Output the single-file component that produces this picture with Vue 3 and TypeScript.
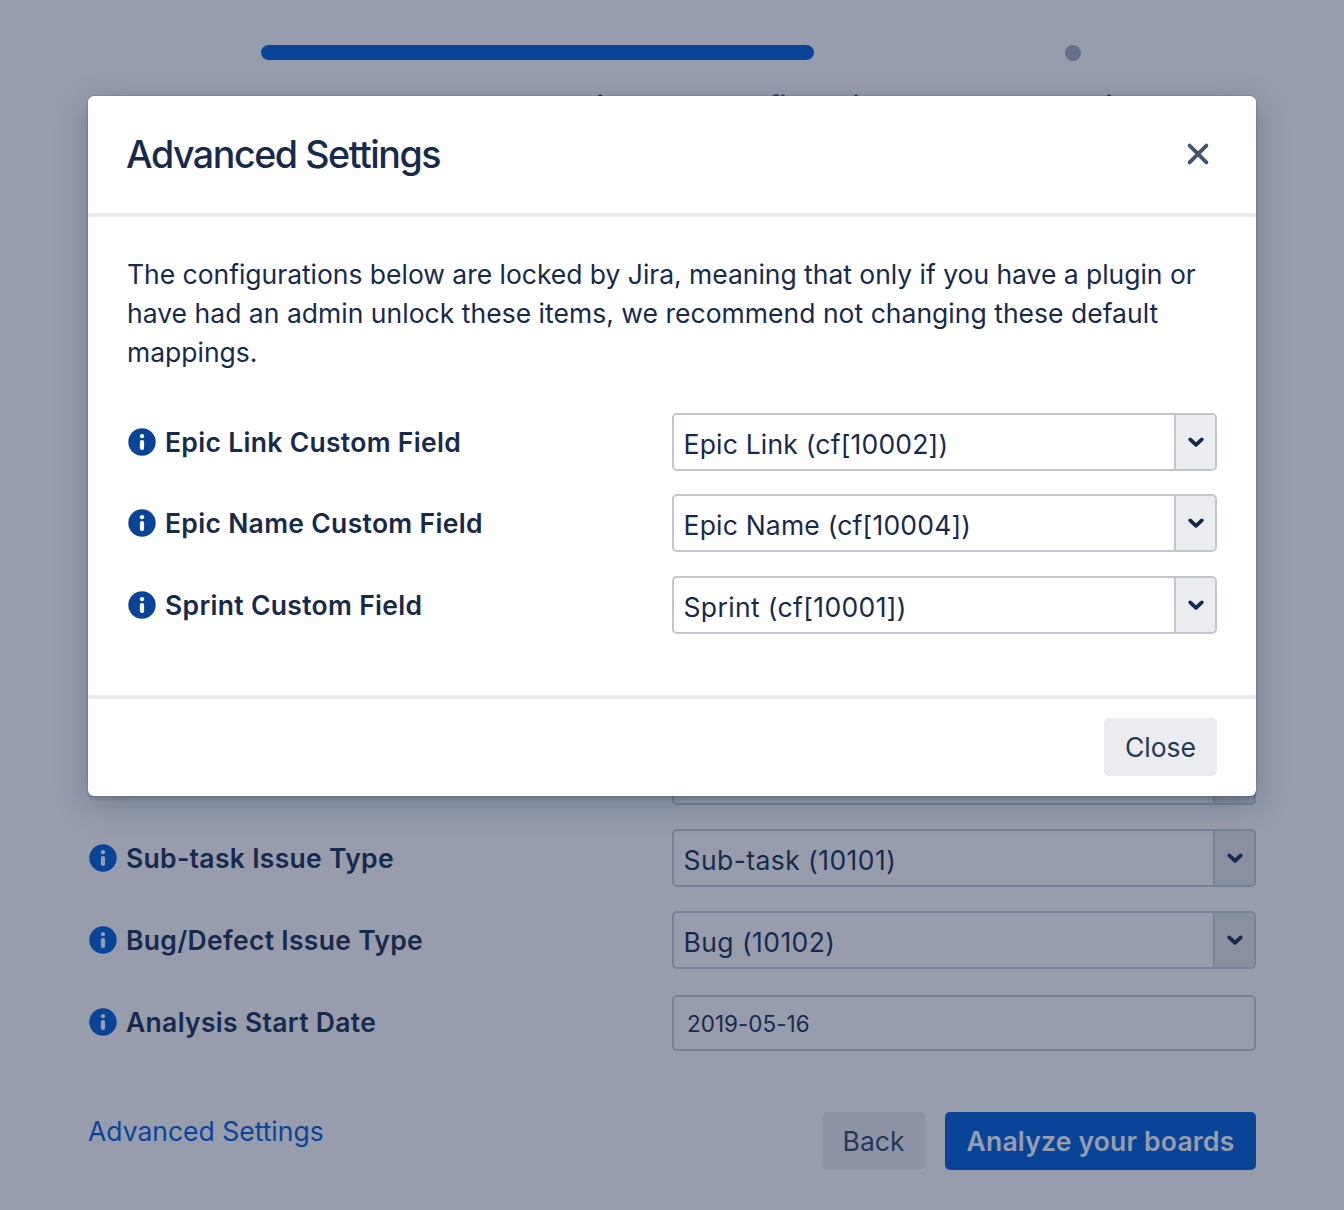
<script setup lang="ts">
interface Field {
  label: string
  value: string
  kind: 'select' | 'text'
}

const steps: { name: string; active?: boolean }[] = [
  { name: 'Welcome' },
  { name: 'Board Selection' },
  { name: 'Configuration', active: true },
  { name: 'Analysis' },
]

const pageFields: Field[] = [
  { label: 'Story Issue Type', value: 'Story (10100)', kind: 'select' },
  { label: 'Sub-task Issue Type', value: 'Sub-task (10101)', kind: 'select' },
  { label: 'Bug/Defect Issue Type', value: 'Bug (10102)', kind: 'select' },
  { label: 'Analysis Start Date', value: '2019-05-16', kind: 'text' },
]

const modalFields: Field[] = [
  { label: 'Epic Link Custom Field', value: 'Epic Link (cf[10002])', kind: 'select' },
  { label: 'Epic Name Custom Field', value: 'Epic Name (cf[10004])', kind: 'select' },
  { label: 'Sprint Custom Field', value: 'Sprint (cf[10001])', kind: 'select' },
]
</script>

<template>
  <div class="app">
    <main class="page">
      <div class="track">
        <div class="bar"></div>
        <div class="dot"></div>
      </div>
      <div class="steps">
        <span v-for="s in steps" :key="s.name" class="step" :class="{ active: s.active }">{{ s.name }}</span>
      </div>
      <div class="page-fields">
        <div v-for="f in pageFields" :key="f.label" class="row">
          <div class="label">
            <svg class="info" viewBox="0 0 28 28"><circle cx="14" cy="14" r="13.7" /><circle class="mark" cx="14" cy="8.2" r="2.1" /><rect class="mark" x="11.9" y="12" width="4.2" height="10" rx="2" /></svg>
            <span>{{ f.label }}</span>
          </div>
          <div class="control" :class="f.kind">
            <span class="value">{{ f.value }}</span>
            <span v-if="f.kind === 'select'" class="arrow"><svg viewBox="0 0 20 14"><path d="M4.2 4.4 L10 9.8 L15.8 4.4" /></svg></span>
          </div>
        </div>
      </div>
      <div class="actions">
        <a class="link">Advanced Settings</a>
        <button class="btn back">Back</button>
        <button class="btn primary">Analyze your boards</button>
      </div>
    </main>

    <section class="modal" role="dialog">
      <header class="head">
        <h1>Advanced Settings</h1>
        <svg class="close-x" viewBox="0 0 24 24"><path d="M3.6 3.6 L20.4 20.4 M20.4 3.6 L3.6 20.4" /></svg>
      </header>
      <div class="body">
        <p>
          <span class="l1">The configurations below are locked by Jira, meaning that only if you have a plugin or</span><br />
          <span class="l2">have had an admin unlock these items, we recommend not changing these default</span><br />
          <span>mappings.</span>
        </p>
        <div v-for="f in modalFields" :key="f.label" class="row">
          <div class="label">
            <svg class="info" viewBox="0 0 28 28"><circle cx="14" cy="14" r="13.7" /><circle class="mark" cx="14" cy="8.2" r="2.1" /><rect class="mark" x="11.9" y="12" width="4.2" height="10" rx="2" /></svg>
            <span>{{ f.label }}</span>
          </div>
          <div class="control select">
            <span class="value">{{ f.value }}</span>
            <span class="arrow"><svg viewBox="0 0 20 14"><path d="M4.2 4.4 L10 9.8 L15.8 4.4" /></svg></span>
          </div>
        </div>
      </div>
      <footer class="foot">
        <button class="btn close">Close</button>
      </footer>
    </section>
  </div>
</template>

<style>
html, body { margin: 0; background: #979dad; }
</style>

<style scoped>
.app {
  --line: #778299;
  --arrow-bg: #8990a2;
  --mark: #979dad;
  position: relative;
  width: 1344px;
  height: 1210px;
  overflow: hidden;
  box-sizing: border-box;
  background: #979dad;
  color: #172a4e;
  font-family: Inter, "Liberation Sans", sans-serif;
  font-size: 27.2px;
  line-height: 39px;
}
.page { padding: 45px 88px 0; display: flex; flex-direction: column; }
.track { display: flex; height: 16px; padding-left: 173px; }
.bar { width: 553px; height: 15px; border-radius: 8px; background: #0a4499; }
.dot { width: 16px; height: 16px; margin-left: 251px; border-radius: 50%; background: #65708a; }
.steps { display: flex; margin: 25px 0 0 46px; width: 1073px; }
.step { flex: 1; text-align: center; font-weight: 600; font-size: 26px; white-space: nowrap; }
.step.active { color: #0a4499; }
.page-fields { margin-top: 622px; }
.row { display: flex; align-items: center; height: 58px; }
.page-fields .row { margin-bottom: 24px; }
.page-fields .row:last-child { height: 56px; margin: 26px 0 0; }
.page-fields .row:last-child .label { margin-bottom: 2px; }
.label {
  flex: 1;
  display: flex;
  align-items: center;
  gap: 9px;
  padding-left: 1px;
  font-weight: 600;
  font-size: 26.5px;
  letter-spacing: .31px;
  white-space: nowrap;
}
.info { width: 28px; height: 28px; fill: #0a4499; }
.info .mark { fill: var(--mark); }
.control {
  box-sizing: border-box;
  width: 584px;
  height: 100%;
  display: flex;
  border: 2px solid var(--line);
  border-radius: 5px;
  overflow: hidden;
}
.value { flex: 1; padding: 10px 0 0 9.5px; font-size: 26.5px; white-space: nowrap; letter-spacing: .2px; }
.page-fields .select .value { letter-spacing: .43px; }
.text .value { padding: 7px 0 0 13px; font-size: 22.4px; letter-spacing: .05px; }
.arrow {
  width: 39px;
  border-left: 2px solid var(--line);
  background: var(--arrow-bg);
  display: flex;
  align-items: center;
  justify-content: center;
}
.arrow svg { width: 20px; height: 14px; fill: none; stroke: #172a4e; stroke-width: 3.8; stroke-linecap: round; stroke-linejoin: round; }
.actions { display: flex; margin-top: 61px; height: 58px; }
.link { flex: 1; color: #0a4499; font-size: 26.5px; }
.btn {
  box-sizing: border-box;
  height: 58px;
  padding: 0;
  border: 0;
  border-radius: 5px;
  font: inherit;
  font-size: 26.5px;
  color: #253858;
}
.back { width: 103px; margin-right: 20px; background: #8d94a6; }
.primary { width: 311px; background: #0a4499; color: #979dad; font-weight: 600; letter-spacing: .2px; }
.modal {
  --line: #c1c6cc;
  --arrow-bg: #ebecf0;
  --mark: #fff;
  position: absolute;
  left: 88px;
  top: 96px;
  width: 1168px;
  height: 700px;
  border-radius: 6px;
  background: #fff;
  box-shadow: 0 0 0 1px rgba(9, 30, 66, .1), 0 4px 2px rgba(9, 30, 66, .1), 0 8px 32px rgba(9, 30, 66, .26);
  display: flex;
  flex-direction: column;
}
.head {
  box-sizing: border-box;
  height: 121px;
  padding: 0 46px 1px 38px;
  border-bottom: 4px solid #ebecf0;
  display: flex;
  align-items: center;
  justify-content: space-between;
}
h1 { margin: 0; padding-top: 2px; font-size: 37.6px; font-weight: 450; letter-spacing: -1.44px; line-height: 46px; }
.close-x { width: 24px; height: 24px; fill: none; stroke: #42526e; stroke-width: 3.8; stroke-linecap: round; }
.body { height: 478px; padding: 38px 39px 0; box-sizing: border-box; }
.body p { margin: 0 0 41px; height: 117px; white-space: nowrap; font-size: 26.5px; }
.l1 { letter-spacing: -.03px; }
.l2 { letter-spacing: .02px; }
.body .row { margin-bottom: 23px; }
.body .row:last-child { margin-top: 24px; }
.body .row:last-child .value { letter-spacing: .36px; }
.body .control { width: 545px; }
.foot { flex: 1; border-top: 4px solid #ebecf0; padding: 19px 39px 0; display: flex; justify-content: flex-end; }
.close { width: 113px; background: #ebecf0; }
</style>
